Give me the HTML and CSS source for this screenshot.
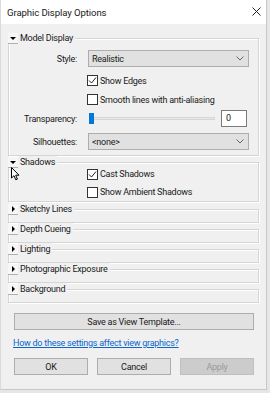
FILE: index.html
```html
<!DOCTYPE html>
<html lang="en">
<head>
    <meta charset="UTF-8">
    <meta name="viewport" content="width=device-width, initial-scale=1.0">
    <title>Graphic Display Options</title>
    <link rel="stylesheet" href="styles.css">
</head>
<body>
    <div class="dialog">
        <!-- Title bar -->
        <div class="titlebar">
            <span class="title">Graphic Display Options</span>
            <svg class="close" width="9" height="9" viewBox="0 0 9 9">
                <path d="M0.5 0.5 L8.5 8.5 M8.5 0.5 L0.5 8.5" stroke="#222" stroke-width="1" fill="none"/>
            </svg>
        </div>

        <div class="content">
            <!-- Model Display -->
            <div class="group">
                <div class="group-head">
                    <span class="toggle"><span class="tri-down"></span></span>
                    <span class="group-title">Model Display</span>
                </div>
                <div class="row first">
                    <span class="lbl">Style:</span>
                    <div class="select">
                        <span>Realistic</span>
                        <svg width="8" height="5" viewBox="0 0 8 5"><path d="M0.5 0.5 L4 4 L7.5 0.5" stroke="#666" fill="none"/></svg>
                    </div>
                </div>
                <div class="row check first-check">
                    <span class="lbl"></span>
                    <span class="box checked"><svg width="9" height="9" viewBox="0 0 9 9"><path d="M1 4.5 L3.5 7 L8 1.5" stroke="#222" stroke-width="1" fill="none"/></svg></span>
                    <span>Show Edges</span>
                </div>
                <div class="row check">
                    <span class="lbl"></span>
                    <span class="box"></span>
                    <span>Smooth lines with anti-aliasing</span>
                </div>
                <div class="row slider-row">
                    <span class="lbl">Transparency:</span>
                    <div class="slider">
                        <span class="track"></span>
                        <span class="thumb"></span>
                    </div>
                    <div class="num">0</div>
                </div>
                <div class="row last">
                    <span class="lbl">Silhouettes:</span>
                    <div class="select">
                        <span>&lt;none&gt;</span>
                        <svg width="8" height="5" viewBox="0 0 8 5"><path d="M0.5 0.5 L4 4 L7.5 0.5" stroke="#666" fill="none"/></svg>
                    </div>
                </div>
            </div>

            <!-- Shadows -->
            <div class="group shadows">
                <div class="group-head">
                    <span class="toggle"><span class="tri-down"></span></span>
                    <span class="group-title">Shadows</span>
                </div>
                <div class="row check shadow-first">
                    <span class="lbl"></span>
                    <span class="box checked"><svg width="9" height="9" viewBox="0 0 9 9"><path d="M1 4.5 L3.5 7 L8 1.5" stroke="#222" stroke-width="1" fill="none"/></svg></span>
                    <span>Cast Shadows</span>
                </div>
                <div class="row check shadow-row">
                    <span class="lbl"></span>
                    <span class="box"></span>
                    <span>Show Ambient Shadows</span>
                </div>
            </div>

            <!-- Collapsed sections -->
            <div class="group collapsed first-collapsed">
                <div class="group-head">
                    <span class="toggle"><span class="tri-right"></span></span>
                    <span class="group-title">Sketchy Lines</span>
                </div>
            </div>
            <div class="group collapsed">
                <div class="group-head">
                    <span class="toggle"><span class="tri-right"></span></span>
                    <span class="group-title">Depth Cueing</span>
                </div>
            </div>
            <div class="group collapsed">
                <div class="group-head">
                    <span class="toggle"><span class="tri-right"></span></span>
                    <span class="group-title">Lighting</span>
                </div>
            </div>
            <div class="group collapsed">
                <div class="group-head">
                    <span class="toggle"><span class="tri-right"></span></span>
                    <span class="group-title">Photographic Exposure</span>
                </div>
            </div>
            <div class="group collapsed">
                <div class="group-head">
                    <span class="toggle"><span class="tri-right"></span></span>
                    <span class="group-title">Background</span>
                </div>
            </div>

            <button class="btn wide">Save as View Template...</button>
            <a class="help" href="#">How do these settings affect view graphics?</a>

            <div class="buttons">
                <button class="btn">OK</button>
                <button class="btn">Cancel</button>
                <button class="btn disabled">Apply</button>
            </div>
        </div>

        <!-- mouse pointer -->
        <svg class="cursor" width="9" height="14" viewBox="0 0 9 14">
            <path d="M0.5 0.5 L0.5 11 L3 8.7 L4.8 12.8 L6.4 12.1 L4.7 8.2 L8 8.2 Z" fill="#fff" stroke="#000" stroke-width="1" stroke-linejoin="round"/>
        </svg>
    </div>
</body>
</html>
```

FILE: styles.css
```css
body {
    margin: 0;
    background: #e6e6e6;
    font-family: Roboto, "Liberation Sans", Arial, sans-serif;
    font-size: 9px;
    letter-spacing: -0.25px;
    color: #1a1a1a;
}
.dialog {
    position: relative;
    width: 267px;
    height: 390px;
    background: #f0f0f0;
    border-left: 1px solid #dadada;
    border-right: 1px solid #c8c8c8;
    border-bottom: 1px solid #c8c8c8;
    box-sizing: border-box;
}
.titlebar {
    height: 24px;
    background: #fff;
    display: flex;
    align-items: center;
    justify-content: space-between;
    padding: 0 5px 0 6px;
}
.title {
    font-size: 9.6px;
    letter-spacing: -0.1px;
}
.close {
    margin-top: -1px;
}
.content {
    padding: 14px 0 0 7px;
}

/* group boxes */
.group {
    width: 251px;
    box-sizing: border-box;
    border: 1px solid #d5d5d5;
    box-shadow: inset 1px 1px 0 #fff, 1px 1px 0 #fff;
    padding-bottom: 5px;
    margin-bottom: 6px;
}
.group.shadows {
    padding-bottom: 0;
}
.group.collapsed {
    padding-bottom: 7px;
}
.group.first-collapsed {
    margin-top: 7px;
}
.group-head {
    display: flex;
    align-items: center;
    height: 12px;
    margin: -7px 0 0 -1px;
}
.toggle {
    width: 10px;
    height: 10px;
    background: #f6f6f6;
    display: flex;
    align-items: center;
    justify-content: center;
    box-shadow: 0 1px 0 #b0b0b0;
}
.tri-down {
    width: 0;
    height: 0;
    border-left: 3px solid transparent;
    border-right: 3px solid transparent;
    border-top: 3px solid #000;
}
.tri-right {
    width: 0;
    height: 0;
    border-top: 3px solid transparent;
    border-bottom: 3px solid transparent;
    border-left: 3px solid #000;
}
.group-title {
    background: #f0f0f0;
    padding: 0 2px 0 2px;
    line-height: 12px;
}

/* rows */
.row {
    display: flex;
    align-items: center;
    height: 17px;
}
.row.first {
    margin-top: 6px;
}
.row.check {
    height: 19px;
}
.row.first-check {
    margin-top: 4px;
}
.row.slider-row {
    margin-top: 1px;
}
.row.last {
    margin-top: 6px;
}
.row.shadow-first {
    margin-top: -3px;
    height: 18px;
}
.row.shadow-row {
    height: 18px;
}
.lbl {
    width: 68px;
    text-align: right;
    margin-right: 11px;
    flex-shrink: 0;
}
.select {
    width: 161px;
    height: 17px;
    box-sizing: border-box;
    background: #e1e1e1;
    border: 1px solid #adadad;
    display: flex;
    align-items: center;
    justify-content: space-between;
    padding: 0 4px 0 3px;
}
.box {
    width: 11px;
    height: 11px;
    box-sizing: border-box;
    border: 1px solid #333;
    background: #fff;
    margin: 0 2px 0 -1px;
    display: flex;
    align-items: center;
    justify-content: center;
}

/* slider */
.slider {
    position: relative;
    width: 127px;
    height: 17px;
    margin-right: 6px;
}
.track {
    position: absolute;
    left: 4px;
    right: 0;
    top: 7px;
    height: 3px;
    box-sizing: border-box;
    background: #e7e7e7;
    border: 1px solid #d6d6d6;
}
.thumb {
    position: absolute;
    left: 1px;
    top: 3px;
    width: 5px;
    height: 11px;
    background: #0078d7;
}
.num {
    width: 26px;
    height: 17px;
    box-sizing: border-box;
    background: #fff;
    border: 1px solid #7a7a7a;
    padding-left: 4px;
    line-height: 15px;
}

/* buttons */
.btn {
    display: block;
    height: 17px;
    box-sizing: border-box;
    background: #e1e1e1;
    border: 1px solid #adadad;
    font-family: inherit;
    font-size: 9px;
    letter-spacing: -0.25px;
    color: #1a1a1a;
    padding: 0;
}
.btn.wide {
    width: 240px;
    margin: 10px 0 0 6px;
}
.help {
    display: block;
    margin: 7px 0 0 5px;
    line-height: 12px;
    color: #0a66cc;
}
.buttons {
    display: grid;
    grid-template-columns: 74px 74px 74px;
    gap: 9px;
    margin: 9px 0 0 6px;
}
.btn.disabled {
    background: #cccccc;
    border-color: #bfbfbf;
    color: #9a9a9a;
}

.cursor {
    position: absolute;
    left: 10px;
    top: 167px;
}
```
